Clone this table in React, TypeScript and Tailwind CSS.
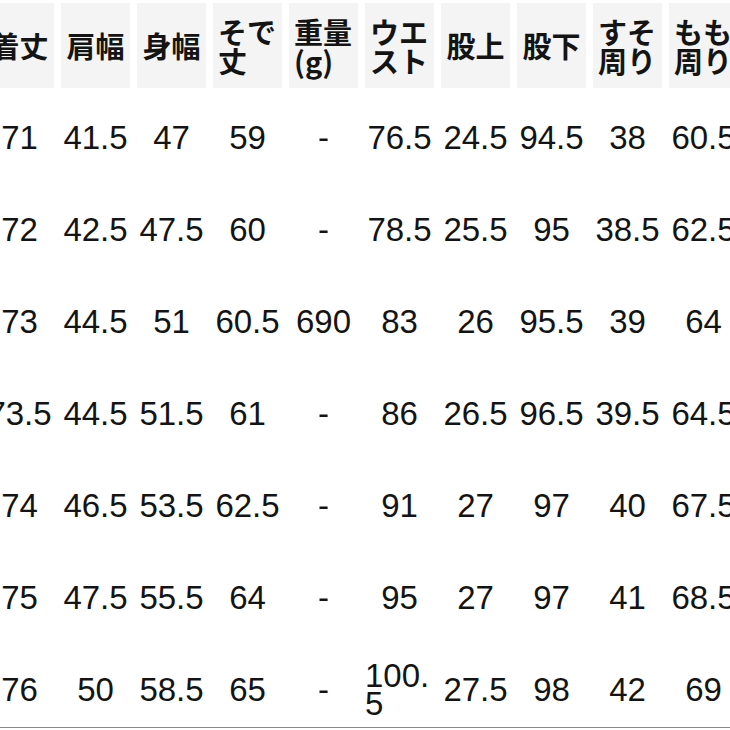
const headers = ["着丈", "肩幅", "身幅", "そで丈", "重量(g)", "ウエスト", "股上", "股下", "すそ周り", "もも周り"];

const rows = [
  ["71", "41.5", "47", "59", "-", "76.5", "24.5", "94.5", "38", "60.5"],
  ["72", "42.5", "47.5", "60", "-", "78.5", "25.5", "95", "38.5", "62.5"],
  ["73", "44.5", "51", "60.5", "690", "83", "26", "95.5", "39", "64"],
  ["73.5", "44.5", "51.5", "61", "-", "86", "26.5", "96.5", "39.5", "64.5"],
  ["74", "46.5", "53.5", "62.5", "-", "91", "27", "97", "40", "67.5"],
  ["75", "47.5", "55.5", "64", "-", "95", "27", "97", "41", "68.5"],
  ["76", "50", "58.5", "65", "-", "100.5", "27.5", "98", "42", "69"],
];

export default function App() {
  return (
    <div
      className="w-[730px] h-[730px] overflow-hidden bg-white text-[#141414]"
      style={{ fontFamily: '"Liberation Sans", "Noto Sans CJK JP", sans-serif' }}
    >
      <div className="ml-[-15px] w-[753px]">
        {/* Header */}
        <div className="grid grid-cols-[repeat(10,69px)] gap-x-[7px] h-[92px] pt-[3px] pb-[4px]">
          {headers.map((h) => (
            <div key={h} className="bg-[#f4f4f4] flex items-center justify-center px-[5px]">
              <div
                className="text-left text-[29px] leading-[29px] font-bold"
                style={{ fontFamily: '"Noto Sans CJK JP", "Noto Sans", sans-serif' }}
              >
                {h}
              </div>
            </div>
          ))}
        </div>

        {/* Rows */}
        {rows.map((row, i) => {
          const last = i === rows.length - 1;
          return (
            <div
              key={i}
              className={
                last
                  ? "grid grid-cols-[repeat(10,69px)] gap-x-[7px] h-[84px] pt-2 border-b-[1.5px] border-[#8a8a8a]"
                  : "grid grid-cols-[repeat(10,69px)] gap-x-[7px] h-[92px]"
              }
            >
              {row.map((v, j) => (
                <div key={j} className="flex items-center justify-center">
                  <div className="text-left text-[33px] leading-[28px] break-all">{v}</div>
                </div>
              ))}
            </div>
          );
        })}
      </div>
    </div>
  );
}
